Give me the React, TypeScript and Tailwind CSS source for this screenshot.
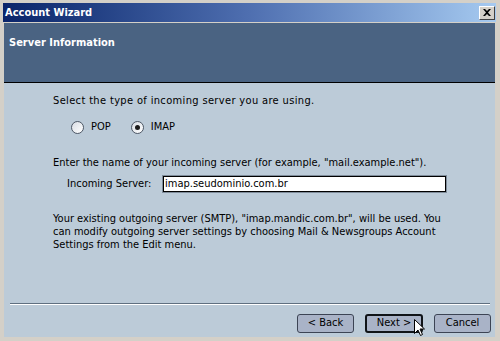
import React from 'react';

const font = { fontFamily: '"DejaVu Sans Condensed", "DejaVu Sans", Tahoma, sans-serif' };

const Radio: React.FC<{ checked?: boolean; label: string }> = ({ checked, label }) => (
    <label className="flex items-center gap-[7px]">
        <span className="w-[13px] h-[13px] rounded-full border border-[#4e5866] bg-gradient-to-br from-[#d8dde4] to-white flex items-center justify-center">
            {checked && <span className="w-[5px] h-[5px] rounded-full bg-[#1a1a1a]"></span>}
        </span>
        <span>{label}</span>
    </label>
);

const WizButton: React.FC<{ label: string; main?: boolean }> = ({ label, main }) => (
    <button
        className={
            'h-[19px] rounded-[3px] bg-[#a9b3c7] text-[#000] text-[11px] flex items-center justify-center ' +
            (main ? 'border-2 border-[#101418] w-[58px]' : 'border border-[#3c4454] w-[57px]')
        }
        style={font}
    >
        {label}
    </button>
);

const App: React.FC = () => {
    return (
        <div className="w-[500px] h-[341px] bg-[#d4d0c8] pt-[3px] pl-[4px] pr-[5px] pb-[4px] flex flex-col text-[11px] text-black relative overflow-hidden" style={font}>
            {/* title bar */}
            <div className="h-[19px] bg-gradient-to-r from-[#0a246a] via-[#4f6fb0] to-[#a6caf0] flex items-center justify-between pl-[2px] pr-[1px] -ml-[1px] -mr-[1px]">
                <span className="text-white font-bold text-[11px] leading-none">Account Wizard</span>
                <span className="w-[16px] h-[14px] bg-[#d4d0c8] border border-t-white border-l-white border-r-[#404040] border-b-[#404040] flex items-center justify-center">
                    <svg width="8" height="7" viewBox="0 0 8 7">
                        <path d="M0 0h2l2 2 2-2h2L5 3.5 8 7H6L4 5 2 7H0l3-3.5z" fill="#000" />
                    </svg>
                </span>
            </div>
            <div className="h-[1px]"></div>

            {/* header */}
            <div className="h-[60px] bg-[#4a6382] border-b border-black pl-[5px] pt-[12px]">
                <span className="text-white font-bold">Server Information</span>
            </div>

            {/* content */}
            <div className="flex-1 bg-[#bccbd8] flex flex-col">
                <div className="pl-[49px] pt-[11px] flex flex-col leading-[14px]">
                    <div className="tracking-[0.35px]">Select the type of incoming server you are using.</div>
                    <div className="flex items-center gap-[20px] pl-[18px] mt-[12px]">
                        <Radio label="POP" />
                        <Radio label="IMAP" checked />
                    </div>
                    <div className="mt-[22px]">Enter the name of your incoming server (for example, "mail.example.net").</div>
                    <div className="flex items-center mt-[5px] pl-[14px]">
                        <span className="w-[95px]">Incoming Server:</span>
                        <span className="w-[285px] h-[18px] border border-[#7f8c9a] bg-white">
                            <span className="block h-full border border-black px-[1px] leading-[14px]">imap.seudominio.com.br</span>
                        </span>
                    </div>
                    <p className="mt-[19px] leading-[13px] w-[394px]">
                        Your existing outgoing server (SMTP), "imap.mandic.com.br", will be used. You can modify outgoing server settings by choosing Mail &amp; Newsgroups Account Settings from the Edit menu.
                    </p>
                </div>

                <div className="mt-auto">
                    <div className="ml-[6px] mr-[5px] border-t border-[#5f6f80] border-b border-b-white"></div>
                    <div className="flex justify-end gap-[11px] pr-[4px] pt-[9px] pb-[4px]">
                        <WizButton label="< Back" />
                        <WizButton label="Next >" main />
                        <WizButton label="Cancel" />
                    </div>
                </div>
            </div>

            {/* mouse pointer */}
            <svg className="absolute left-[414px] top-[319px]" width="11" height="17" viewBox="0 0 11 17">
                <path d="M0.5 0.5v14l3.5-3.5 2.5 5.5 2-1-2.5-5.5h4.5z" fill="#fff" stroke="#000" strokeWidth="1" />
            </svg>
        </div>
    );
};

export default App;
